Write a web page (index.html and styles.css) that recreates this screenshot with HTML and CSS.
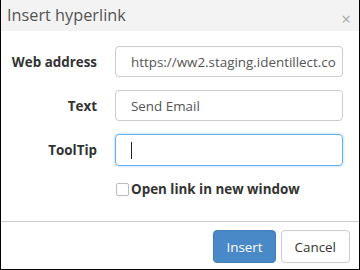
FILE: index.html
```html
<!DOCTYPE html>
<html>
<head>
<meta charset="utf-8">
<link rel="stylesheet" href="styles.css">
</head>
<body>
<div class="dialog">
  <div class="header">
    <span class="title">Insert hyperlink</span>
    <span class="close">×</span>
  </div>
  <div class="body">
    <div class="row">
      <label class="label">Web address</label>
      <div class="input">https://ww2.staging.identillect.co</div>
    </div>
    <div class="row">
      <label class="label">Text</label>
      <div class="input">Send Email</div>
    </div>
    <div class="row">
      <label class="label">ToolTip</label>
      <div class="input focus"><span class="caret"></span></div>
    </div>
    <div class="row check-row">
      <span></span>
      <label class="check"><span class="box"></span>Open link in new window</label>
    </div>
  </div>
  <div class="footer">
    <button class="btn primary">Insert</button>
    <button class="btn">Cancel</button>
  </div>
</div>
</body>
</html>
```
FILE: styles.css
```css
html, body { margin: 0; padding: 0; }
body { font-family: "Open Sans", "DejaVu Sans", sans-serif; background: #fff; }
.dialog {
  width: 360px; height: 270px; box-sizing: border-box;
  border: 1px solid #000; border-top: none;
  display: flex; flex-direction: column;
}
.header {
  height: 31px; background: #f3f3f3;
  display: flex; align-items: center; justify-content: space-between;
  padding: 0 8px 0 6px;
}
.title { font-size: 16.3px; color: #555; line-height: 1; }
.close { font-size: 17px; color: #aaa; line-height: 1; margin-top: 6px; }
.body { padding: 15px 15px 0 0; display: flex; flex-direction: column; gap: 13px; flex: 1; }
.row { display: grid; grid-template-columns: 96px 228px; column-gap: 18px; align-items: center; }
.label { text-align: right; font-weight: bold; font-size: 13.4px; color: #333; }
.input {
  height: 31px; box-sizing: border-box; border: 1px solid #ccc; border-radius: 4px;
  padding: 0 0 0 15px; font-size: 13.4px; color: #555; display: flex; align-items: center;
  white-space: nowrap; overflow: hidden;
}
.input.focus { border-color: #66afe9; box-shadow: 0 0 3px rgba(102,175,233,.6); height: 32px; }
.caret { width: 1px; height: 17px; background: #222; }
.check-row { margin-top: 1px; }
.check { display: flex; align-items: center; font-weight: bold; font-size: 13.4px; color: #333; margin-left: 1px; }
.box { width: 11px; height: 11px; border: 1px solid #bbb; border-radius: 2px; margin-right: 2px; }
.footer {
  border-top: 1px solid #ccc; height: 48px; box-sizing: border-box;
  display: flex; justify-content: flex-end; align-items: flex-start; gap: 5px; padding: 8px 9px 0 0;
}
.btn {
  font-family: inherit; font-size: 13.4px; height: 33px; box-sizing: border-box;
  border: 1px solid #ccc; border-radius: 4px; background: #fff; color: #333; padding: 0 13px;
}
.btn.primary { background: #4a89c8; border-color: #3f7dbb; color: #fff; padding: 0 12px; }
```
